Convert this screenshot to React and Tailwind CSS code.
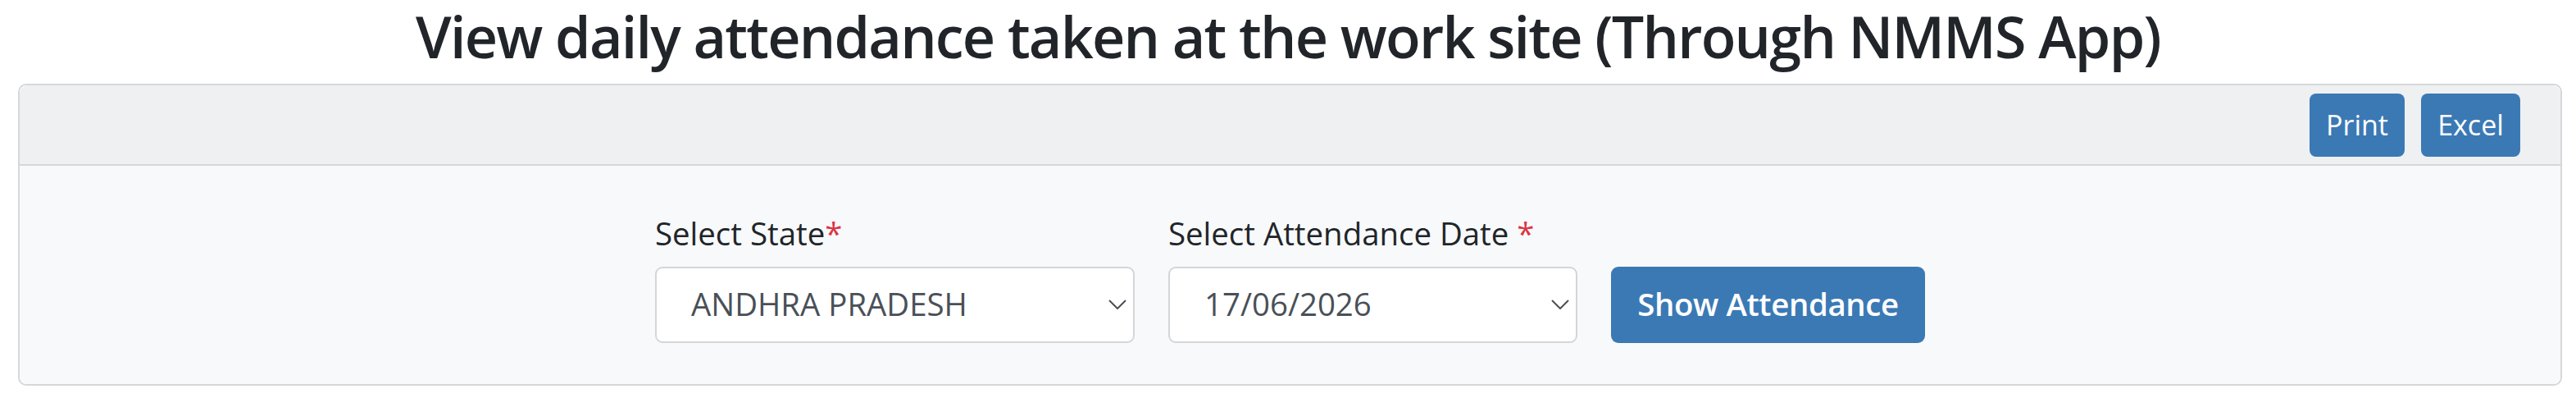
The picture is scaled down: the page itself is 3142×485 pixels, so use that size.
import React from "react";

const Chevron = () => (
  <svg width="22" height="12" viewBox="0 0 22 12" fill="none" className="shrink-0">
    <path d="M1 1 L11 11 L21 1" stroke="#4d4f52" strokeWidth="2" />
  </svg>
);

const FakeSelect = ({ value, width, textPad }) => (
  <div
    className={`flex h-[93px] items-center justify-between rounded-[9px] border-2 border-[#d3d6d9] bg-white pr-[8px] text-[38.4px] text-[#495057] ${width} ${textPad}`}
  >
    <span>{value}</span>
    <Chevron />
  </div>
);

const App = () => {
  return (
    <div className="min-h-screen bg-white font-['Open_Sans',sans-serif] text-[#212529]">
      <h2 className="pt-[4px] text-center text-[70px] font-semibold leading-[80px] tracking-[-0.025em]">
        View daily attendance taken at the work site (Through NMMS App)
      </h2>

      <div className="mt-[18px] ml-[22px] mr-[17px] rounded-[10px] border-2 border-[#d5d7da]">
        {/* header with buttons */}
        <div className="flex h-[98px] items-center justify-end gap-[20px] rounded-t-[10px] border-b-2 border-[#d5d7da] bg-[#eff0f2] pr-[49px]">
          <button className="h-[77px] w-[116px] rounded-[8px] bg-[#3b79b5] text-[34px] text-white">
            Print
          </button>
          <button className="h-[77px] w-[121px] rounded-[8px] bg-[#3b79b5] text-[34px] text-white">
            Excel
          </button>
        </div>

        {/* body */}
        <div className="flex items-end justify-center gap-[41px] rounded-b-[10px] bg-[#f8f9fa] pt-[54px] pb-[50px]">
          <div className="flex flex-col">
            <label className="mb-[11px] text-[38.4px] leading-[57.6px]">
              Select State<span className="text-[#dc3545]">*</span>
            </label>
            <FakeSelect value="ANDHRA PRADESH" width="w-[585px]" textPad="pl-[42px]" />
          </div>

          <div className="flex flex-col">
            <label className="mb-[11px] text-[38.4px] leading-[57.6px]">
              Select Attendance Date <span className="text-[#dc3545]">*</span>
            </label>
            <FakeSelect value="17/06/2026" width="w-[499px]" textPad="pl-[42px]" />
          </div>

          <button className="h-[93px] w-[383px] rounded-[9px] bg-[#3b79b5] text-[38.4px] font-semibold tracking-[-0.01em] text-white">
            Show Attendance
          </button>
        </div>
      </div>
    </div>
  );
};

export default App;
